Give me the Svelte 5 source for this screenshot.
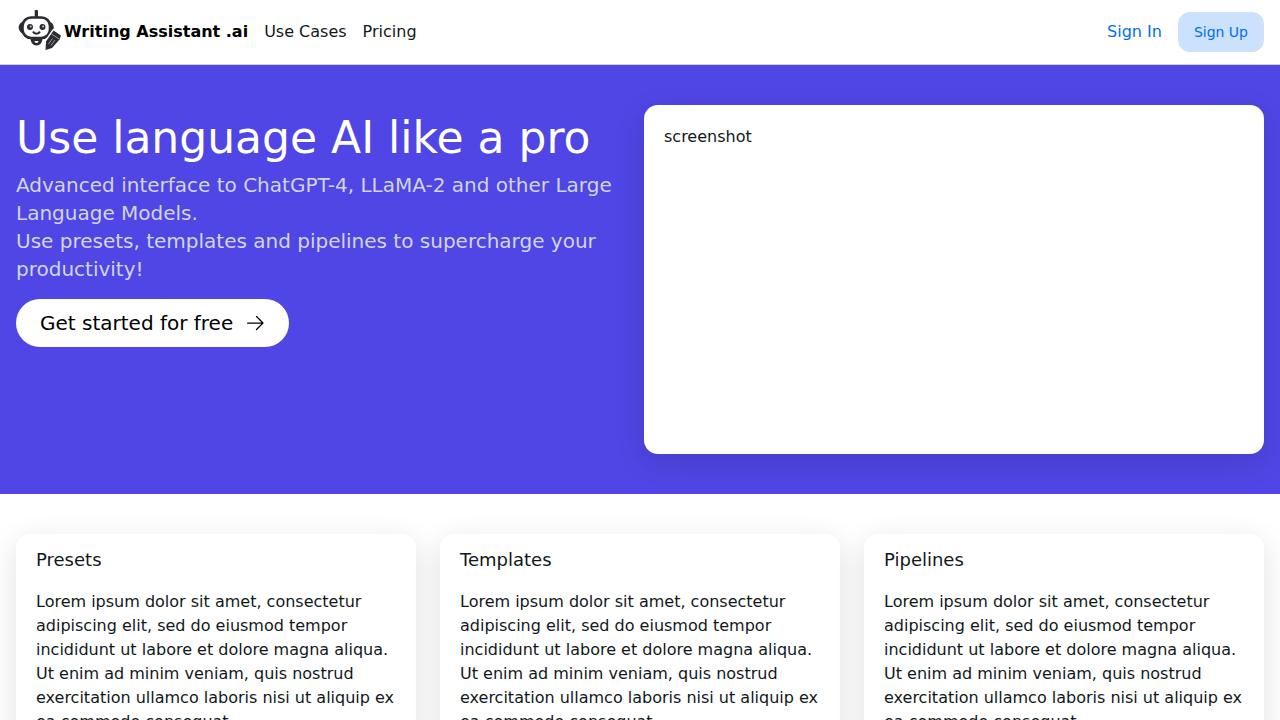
<script>
	const links = ['Use Cases', 'Pricing'];

	const lorem =
		'Lorem ipsum dolor sit amet, consectetur adipiscing elit, sed do eiusmod tempor incididunt ut labore et dolore magna aliqua. Ut enim ad minim veniam, quis nostrud exercitation ullamco laboris nisi ut aliquip ex ea commodo consequat.';

	const features = [
		{ title: 'Presets', text: lorem },
		{ title: 'Templates', text: lorem },
		{ title: 'Pipelines', text: lorem }
	];
</script>

<nav>
	<a class="brand" href="/">
		<svg class="logo" viewBox="0 0 48 48" aria-hidden="true">
			<g fill="#2b2b30">
				<rect x="18.700" y="2" width="3.300" height="8" rx="1" />
				<path d="M7 14C4.500 14 2.700 17 2.700 19.500S4.500 25 7 25.500zM33.500 14c2.500 0 4.300 3 4.300 5.500s-1.800 5.500-4.300 6z" />
				<path d="M14.500 30h12c0 4.500-2.500 7.500-6 7.500s-6-3-6-7.500z" />
			</g>
			<rect x="6.500" y="9.500" width="27.500" height="20.500" rx="8.500" fill="#fff" stroke="#2b2b30" stroke-width="2.600" />
			<circle cx="14" cy="19" r="3" fill="#2b2b30" />
			<circle cx="26.500" cy="19" r="3" fill="#2b2b30" />
			<circle cx="14.700" cy="18.500" r="1" fill="#ccc" />
			<circle cx="27.200" cy="18.500" r="1" fill="#ccc" />
			<path d="M17 23.500c1.500 3 5.500 3 7 0" fill="none" stroke="#2b2b30" stroke-width="2" />
			<path d="M18.500 33h4c0 1-.8 2-2 2s-2-1-2-2z" fill="#fff" />
			<path
				d="M37.500 22.500l7.500 5-1.500 4-7.500 8.500-6.500 2 .5-8.500z"
				fill="#2b2b30"
				stroke="#fff"
				stroke-width="3"
				stroke-linejoin="round"
				paint-order="stroke"
			/>
			<path d="M35.500 26l7.500 5M36.500 30.500l-4 5.500M39 32l-4 5.500" stroke="#bbb" stroke-width=".8" />
		</svg>
		Writing Assistant .ai
	</a>
	{#each links as link (link)}
		<a href="/">{link}</a>
	{/each}
	<div class="account">
		<a href="/">Sign In</a>
		<a class="signup" href="/">Sign Up</a>
	</div>
</nav>

<main>
	<section class="hero">
		<div>
			<h1>Use language AI like a pro</h1>
			<p>
				Advanced interface to ChatGPT-4, LLaMA-2 and other Large Language Models.<br />
				Use presets, templates and pipelines to supercharge your productivity!
			</p>
			<button type="button">
				Get started for free
				<svg viewBox="0 0 20 20" aria-hidden="true">
					<path d="M2.500 10h15.500M11.500 3.500L18 10l-6.500 6.500" />
				</svg>
			</button>
		</div>
		<div class="card preview">screenshot</div>
	</section>

	<section class="features">
		{#each features as feature (feature.title)}
			<article class="card">
				<h2>{feature.title}</h2>
				<p>{feature.text}</p>
			</article>
		{/each}
	</section>
</main>

<style>
	:global(body) {
		margin: 0;
		background: #fff;
		color: #11181c;
		font: 16px/24px 'DejaVu Sans', sans-serif;
	}

	h1,
	h2,
	p {
		margin: 0;
		font-weight: 400;
	}

	a {
		color: inherit;
		text-decoration: none;
	}

	nav {
		display: flex;
		align-items: center;
		gap: 16px;
		height: 64px;
		padding: 0 16px;
		border-bottom: 1px solid #d4d4d8;
	}

	.brand {
		display: flex;
		align-items: center;
		color: #000;
		font-weight: 700;
	}

	.logo {
		width: 48px;
		height: 48px;
	}

	.account {
		display: flex;
		align-items: center;
		gap: 16px;
		margin-left: auto;
		color: #006fee;
	}

	.signup {
		padding: 10px 16px;
		border-radius: 12px;
		background: #cce1fc;
		font-size: 14px;
		line-height: 20px;
	}

	.hero {
		display: grid;
		grid-template-columns: 1fr 1fr;
		gap: 8px;
		padding: 40px 16px;
		background: #4f46e5;
	}

	h1 {
		color: #fff;
		font-size: 44px;
		line-height: 66px;
	}

	.hero p {
		color: #d1d5db;
		font-size: 20px;
		line-height: 28px;
	}

	button {
		display: flex;
		align-items: center;
		gap: 12px;
		height: 48px;
		margin-top: 16px;
		padding: 0 24px;
		border: none;
		border-radius: 24px;
		background: #fff;
		color: #000;
		font: inherit;
		font-size: 20px;
		cursor: pointer;
	}

	button svg {
		width: 20px;
		height: 20px;
		fill: none;
		stroke: currentColor;
		stroke-width: 1.25;
		stroke-linecap: round;
		stroke-linejoin: round;
	}

	.card {
		box-sizing: border-box;
		border-radius: 14px;
		background: #fff;
		box-shadow: 0 8px 30px rgba(0, 0, 0, 0.12);
	}

	.preview {
		aspect-ratio: 16 / 9;
		padding: 20px;
	}

	.features {
		display: grid;
		grid-template-columns: repeat(3, 1fr);
		gap: 24px;
		padding: 40px 16px;
	}

	.features .card {
		padding: 12px 20px 20px;
	}

	h2 {
		margin-bottom: 16px;
		font-size: 18px;
		line-height: 28px;
	}
</style>
